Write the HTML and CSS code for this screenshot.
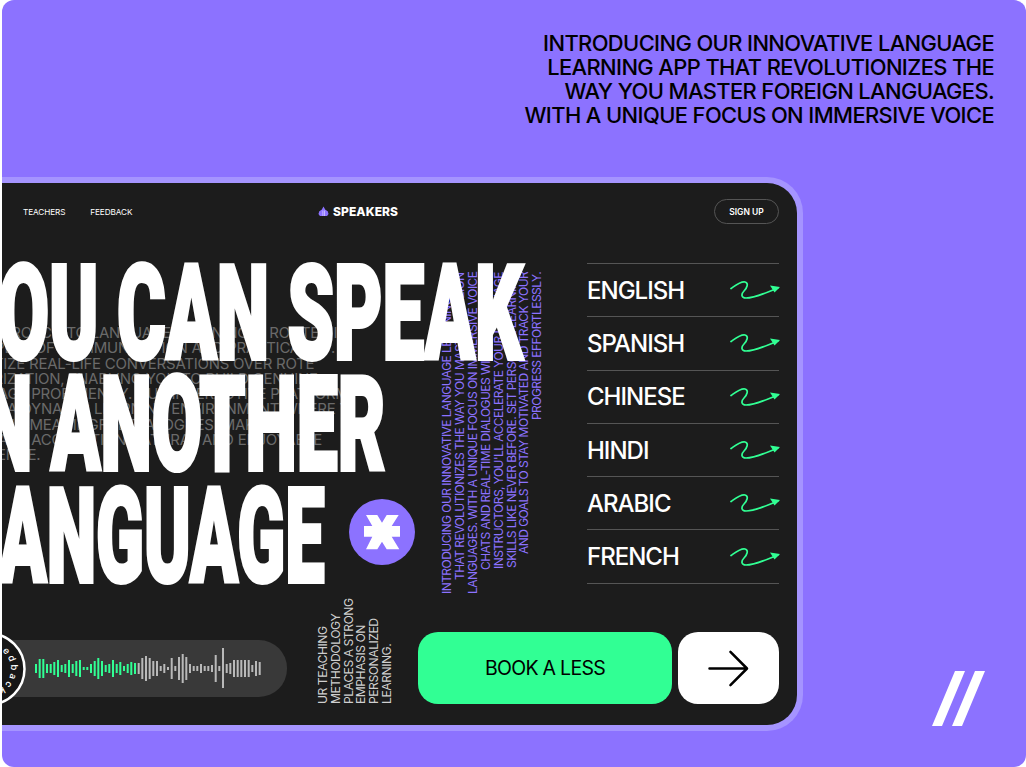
FILE: index.html
```html
<!DOCTYPE html>
<html lang="en">
<head>
<meta charset="utf-8">
<title>Speakers</title>
<link rel="stylesheet" href="styles.css">
</head>
<body>
<main class="slide">
  <p class="intro">INTRODUCING OUR INNOVATIVE LANGUAGE<br>LEARNING APP THAT REVOLUTIONIZES THE<br>WAY YOU MASTER FOREIGN LANGUAGES.<br>WITH A UNIQUE FOCUS ON IMMERSIVE VOICE</p>
  <section class="card">
    <header class="nav">
      <nav class="links"><a>TEACHERS</a><a>FEEDBACK</a></nav>
      <div class="brand">
        <svg class="brand-icon" viewBox="0 0 12 12"><path d="M6 .5 8 4l2.600 1.600.9 3.200-1.600 2.200H2.100L.5 8.800l.9-3.200L4 4z" fill="#8c72ff"/><path d="M5 5h.7v6H5zM6.600 5h.7v6h-.7z" fill="#e4ddff"/></svg>
        <span>SPEAKERS</span>
      </div>
      <button class="signup">SIGN UP</button>
    </header>
    <div class="middle">
      <div class="stage">
        <p class="story">OUR APPROACH TO LANGUAGE LEARNING IS ROOTED IN THE<br>PRINCIPLES OF COMMUNICATION AND PRACTICALITY. WE<br>PRIORITIZE REAL-LIFE CONVERSATIONS OVER ROTE<br>MEMORIZATION, ENABLING YOU TO BUILD GENUINE<br>LANGUAGE PROFICIENCY. OUR INTERACTIVE PLATFORM<br>OFFERS A DYNAMIC LEARNING ENVIRONMENT WHERE YOU<br>ENGAGE IN MEANINGFUL DIALOGUES, MAKING<br>LANGUAGE ACQUISITION NATURAL AND ENJOYABLE<br>EXPERIENCE.</p>
        <p class="vertical-copy">INTRODUCING OUR INNOVATIVE LANGUAGE LEARNING APP<br>THAT REVOLUTIONIZES THE WAY YOU MASTER FOREIGN<br>LANGUAGES. WITH A UNIQUE FOCUS ON IMMERSIVE VOICE<br>CHATS AND REAL-TIME DIALOGUES WITH AI-POWERED<br>INSTRUCTORS, YOU'LL ACCELERATE YOUR LANGUAGE<br>SKILLS LIKE NEVER BEFORE. SET PERSONAL LEARNING<br>AND GOALS TO STAY MOTIVATED AND TRACK YOUR<br>PROGRESS EFFORTLESSLY.</p>
        <h1 class="headline">
          <span class="line line-1">YOU CAN SPEAK</span>
          <span class="line line-2">IN ANOTHER</span>
          <span class="line line-3">LANGUAGE</span>
        </h1>
        <svg class="star" viewBox="0 0 66 66"><circle cx="33" cy="33" r="33" fill="#8c72ff"/><polygon fill="#fff" points="17,16 28.3,16 33,23.7 37.7,16 49.7,16 42.7,27 51,27 51,37.7 42.7,37.7 50.3,50.3 37.7,50.3 33,42.7 28.3,50.3 17,50.3 23.3,37.7 15,37.7 15,27 23.3,27"/></svg>
      </div>
      <ul class="languages">
        <li><span>ENGLISH</span><svg class="squiggle" viewBox="0 0 50 22"><use href="#swoosh"/></svg></li>
        <li><span>SPANISH</span><svg class="squiggle" viewBox="0 0 50 22"><use href="#swoosh"/></svg></li>
        <li><span>CHINESE</span><svg class="squiggle" viewBox="0 0 50 22"><use href="#swoosh"/></svg></li>
        <li><span>HINDI</span><svg class="squiggle" viewBox="0 0 50 22"><use href="#swoosh"/></svg></li>
        <li><span>ARABIC</span><svg class="squiggle" viewBox="0 0 50 22"><use href="#swoosh"/></svg></li>
        <li><span>FRENCH</span><svg class="squiggle" viewBox="0 0 50 22"><use href="#swoosh"/></svg></li>
      </ul>
    </div>
    <div class="bottom">
      <div class="player">
        <svg class="wave" viewBox="0 0 285 57">
          <path stroke="#31ff94" stroke-width="2" fill="none" d="M34 24v9M37.700 19v19M41.300 19v19M45 24v9M48.700 24v9M52.300 22v13M56 20v17M59.700 25v7M63.300 24v9M67 20v17M70.700 24v9M74.300 21v15M78 20v17M81.700 27v3M85.300 27v3M89 24v9M92.700 21v15M96.300 18v21M100 21v15M103.700 25v7M107.300 24v9M111 20v17M114.700 24v9M118.300 22v13M122 26v5M125.700 24v9M129.300 22v13M133 23v11"/>
          <path stroke="#b9b9b9" stroke-width="2" fill="none" d="M136.700 23v11M140.300 18v21M144 16v25M147.700 18v21M151.300 21v15M155 21v15M158.700 26v5M162.300 24v9M166 27v3M169.700 18v21M173.300 26v5M177 17v23M180.700 14v29M184.300 17v23M188 24v9M191.700 26v5M195.300 26v5M199 24v9M202.700 26v5M206.300 26v5M210 25v7M213.700 15v27M217.300 26v5M221 8v40M224.700 24v9M228.300 23v11M232 20v17M235.700 20v17M239.300 20v17M243 20v17M246.700 20v17M250.300 25v7M254 21v15M257.700 22v13"/>
        </svg>
        <svg class="badge" viewBox="0 0 76 76">
          <defs><path id="ring" d="M38 16a22 22 0 1 1-.01 0"/></defs>
          <circle cx="38" cy="38" r="35.500" fill="#161616" stroke="#fff" stroke-width="2.500"/>
          <text class="badge-text"><textPath href="#ring">feedback</textPath></text>
        </svg>
      </div>
      <p class="method">UR TEACHING<br>METHODOLOGY<br>PLACES A STRONG<br>EMPHASIS ON<br>PERSONALIZED<br>LEARNING.</p>
      <div class="actions">
        <button class="book">BOOK A LESS</button>
        <button class="go"><svg viewBox="0 0 42 38"><path d="M1.500 19H39M23 2l17 17-17 17" fill="none" stroke="#000" stroke-width="2.600" stroke-linecap="round" stroke-linejoin="round"/></svg></button>
      </div>
    </div>
  </section>
  <svg class="mark" viewBox="0 0 53 55"><path d="M0 55 23 0h10L10 55zM20 55 43 0h10L30 55z" fill="#fff"/></svg>
  <svg class="defs"><defs><g id="swoosh"><path d="M1 9.500C6 6 11 2 15 3c4 1 2 6-1 9-3 3-3 7 2 7 10 0 21-6 32-10" fill="none" stroke="#31ff94" stroke-width="1.700" stroke-linecap="round"/><path d="M50 8 40 6.500 44.500 13.500z" fill="#31ff94"/></g></defs></svg>
</main>
</body>
</html>
```
FILE: styles.css
```css
* { box-sizing: border-box; }
html, body { margin: 0; padding: 0; background: #fff; }
body { width: 1026px; height: 767px; overflow: hidden; font-family: "Inter", "Liberation Sans", sans-serif; }

.slide {
  position: relative;
  width: 1024px;
  height: 767px;
  margin-left: 2px;
  padding-top: 31px;
  background: #8c72ff;
  border-radius: 12px;
  overflow: hidden;
}
.intro {
  margin: 0;
  padding-right: 32px;
  text-align: right;
  font-size: 21.900px;
  font-weight: 500;
  line-height: 24px;
  letter-spacing: -0.6px;
  color: #000;
  white-space: nowrap;
}
.card {
  width: 801px;
  height: 554px;
  margin-top: 50px;
  background: #1c1c1c;
  border: 6px solid #a594ff;
  border-left: 0;
  border-radius: 0 36px 36px 0;
  overflow: hidden;
}
.nav {
  display: grid;
  grid-template-columns: 316px 1fr auto;
  align-items: center;
  height: 41px;
  padding: 16px 18px 0 0;
}
.links { display: flex; gap: 25px; padding-left: 21px; padding-top: 1px; }
.links a { font-size: 8.200px; letter-spacing: -0.1px; color: #fff; }
.brand { display: flex; align-items: center; gap: 4px; color: #fff; font-size: 12px; font-weight: 800; letter-spacing: 0.1px; }
.brand-icon { width: 11px; height: 11px; }
.signup {
  width: 65px;
  height: 25px;
  padding: 0;
  background: transparent;
  border: 1px solid #555;
  border-radius: 13px;
  color: #fff;
  font: 600 8.500px "Inter", sans-serif;
}
.middle { display: grid; grid-template-columns: 585px 192px; height: 376px; }
.stage { position: relative; padding-top: 34.500px; }
.story {
  position: absolute;
  top: 101px;
  left: -55px;
  width: 400px;
  margin: 0;
  overflow: hidden;
  font-size: 15px;
  line-height: 15.300px;
  letter-spacing: -0.25px;
  color: #6a6a6a;
  white-space: nowrap;
}
.vertical-copy {
  position: absolute;
  top: 48px;
  left: 439px;
  height: 325px;
  margin: 0;
  writing-mode: vertical-rl;
  transform: rotate(180deg);
  text-align: right;
  font-size: 12px;
  line-height: 12.900px;
  letter-spacing: -0.55px;
  color: #8c72ff;
  white-space: nowrap;
}
.headline {
  position: relative;
  margin: 0;
  font: 900 132px/111.500px "Roboto", sans-serif;
  color: #fff;
}
.line {
  display: block;
  width: max-content;
  transform-origin: 0 50%;
  white-space: nowrap;
  -webkit-text-stroke: 4px #fff;
}
.line-1 { margin-left: -50px; transform: scaleX(.564); }
.line-2 { margin-left: -43px; transform: scaleX(.554); }
.line-3 { margin-left: -42px; transform: scaleX(.533); }
.star { position: absolute; top: 275px; left: 347px; width: 66px; height: 66px; }

.languages { margin: 39px 0 0; padding: 0; list-style: none; }
.languages li {
  display: flex;
  align-items: center;
  justify-content: space-between;
  height: 53.300px;
  border-top: 1.500px solid #555;
  color: #fff;
  font-size: 24px;
  font-weight: 500;
  letter-spacing: -1px;
}
.languages li:last-child { height: 54.800px; border-bottom: 1.500px solid #555; }
.squiggle { width: 50px; height: 22px; margin-right: -1px; }

.bottom { display: flex; align-items: flex-end; height: 125px; padding: 0 18px 21px 0; }
.player {
  position: relative;
  width: 285px;
  height: 57px;
  margin-bottom: 7px;
  background: #393939;
  border-radius: 0 28px 28px 0;
  flex: none;
}
.wave { display: block; width: 285px; height: 57px; }
.badge { position: absolute; top: -9px; left: -51px; width: 76px; height: 76px; }
.badge-text { font: 500 9.500px "Inter", sans-serif; fill: #fff; letter-spacing: 2.400px; }
.method {
  flex: none;
  height: 104px;
  margin: 0 0 0 30px;
  writing-mode: vertical-rl;
  transform: rotate(180deg);
  font-size: 12.200px;
  line-height: 12.800px;
  letter-spacing: -0.5px;
  color: #cfcfcf;
  text-align: left;
  white-space: nowrap;
}
.actions { display: flex; gap: 6px; margin-left: auto; }
.actions button { border: 0; padding: 0; height: 72px; border-radius: 20px; }
.book {
  width: 254px;
  background: #31ff94;
  color: #000;
  font: 400 19.500px "Inter", sans-serif;
  letter-spacing: -0.7px;
}
.go { width: 101px; background: #fff; display: flex; align-items: center; justify-content: center; }
.go svg { width: 41px; height: 37px; }

.mark { position: absolute; top: 671px; left: 930px; width: 53px; height: 55px; }
.defs { position: absolute; width: 0; height: 0; }
```
